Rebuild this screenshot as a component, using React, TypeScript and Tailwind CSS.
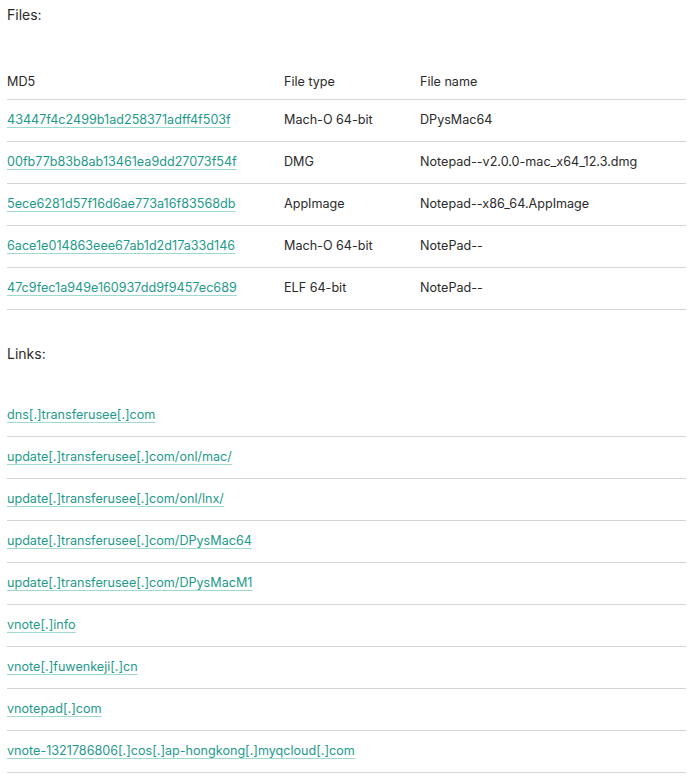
import React from 'react';

const files = [
  ['43447f4c2499b1ad258371adff4f503f', 'Mach-O 64-bit', 'DPysMac64'],
  ['00fb77b83b8ab13461ea9dd27073f54f', 'DMG', 'Notepad--v2.0.0-mac_x64_12.3.dmg'],
  ['5ece6281d57f16d6ae773a16f83568db', 'AppImage', 'Notepad--x86_64.AppImage'],
  ['6ace1e014863eee67ab1d2d17a33d146', 'Mach-O 64-bit', 'NotePad--'],
  ['47c9fec1a949e160937dd9f9457ec689', 'ELF 64-bit', 'NotePad--'],
];

const links = [
  'dns[.]transferusee[.]com',
  'update[.]transferusee[.]com/onl/mac/',
  'update[.]transferusee[.]com/onl/lnx/',
  'update[.]transferusee[.]com/DPysMac64',
  'update[.]transferusee[.]com/DPysMacM1',
  'vnote[.]info',
  'vnote[.]fuwenkeji[.]cn',
  'vnotepad[.]com',
  'vnote-1321786806[.]cos[.]ap-hongkong[.]myqcloud[.]com',
];

const linkCls = 'text-[#1d9a8a] underline decoration-[#9fd8cf] underline-offset-[3px]';

export default function App() {
  return (
    <div className="bg-white w-[691px] h-[776px] overflow-hidden pl-[7px] pr-[5px] text-[12.6px] text-[#2a2a2a]" style={{ fontFamily: 'Inter, "Noto Sans", sans-serif' }}>
      <div className="pt-[5px] h-[20px] text-[14px] leading-[20px]">Files:</div>
      <div className="h-[49px]" />
      <div className="flex h-[31px] items-start pt-[4px] border-b border-[#d4d4d4]">
        <div className="w-[277px]">MD5</div>
        <div className="w-[136px]">File type</div>
        <div>File name</div>
      </div>
      {files.map(f => (
        <div key={f[0]} className="flex h-[42px] items-center border-b border-[#d4d4d4]">
          <div className="w-[277px]"><span className={linkCls}>{f[0]}</span></div>
          <div className="w-[136px]">{f[1]}</div>
          <div>{f[2]}</div>
        </div>
      ))}
      <div className="h-[34px]" />
      <div className="text-[14px] leading-[20px]">Links:</div>
      <div className="h-[31px]" />
      {links.map(l => (
        <div key={l} className="flex h-[42px] items-center border-b border-[#d4d4d4]">
          <span className={linkCls}>{l}</span>
        </div>
      ))}
    </div>
  );
}
